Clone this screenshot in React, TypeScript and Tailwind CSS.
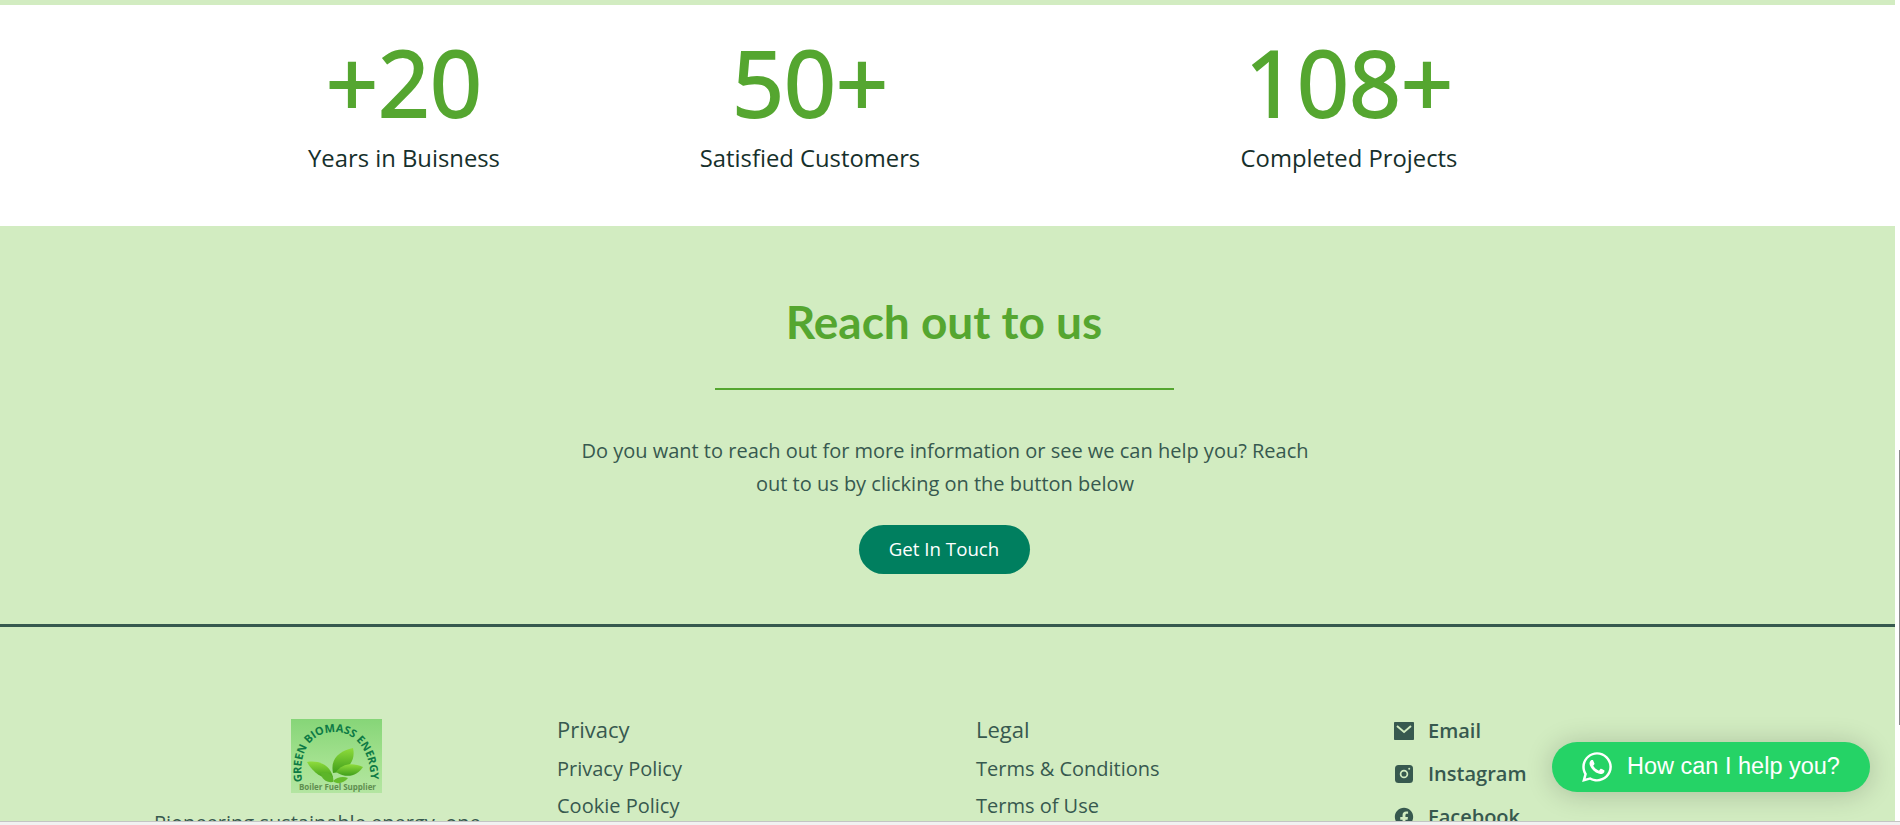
// App.tsx
import type { ReactNode } from "react";
import { FaWhatsapp } from "react-icons/fa";
import { RiFacebookCircleFill, RiMailFill } from "react-icons/ri";

const stats = [
  { value: "+20", label: "Years in Buisness" },
  { value: "50+", label: "Satisfied Customers" },
  { value: "108+", label: "Completed Projects" },
];

function InstagramIcon() {
  return (
    <svg viewBox="0 0 18 18" className="h-[18px] w-[18px]" fill="none">
      <rect width="18" height="18" rx="3.5" fill="#37594f" />
      <circle cx="9" cy="9" r="3.4" stroke="#d2ecc1" strokeWidth="1.7" />
      <circle cx="14.2" cy="3.8" r="1" fill="#d2ecc1" />
    </svg>
  );
}

function Logo() {
  return (
    <svg viewBox="0 0 91 74" className="h-[74px] w-[91px]">
      <defs>
        <linearGradient id="logoBg" x1="0" y1="0" x2="0" y2="1">
          <stop offset="0" stopColor="#86d578" />
          <stop offset="0.6" stopColor="#a5e290" />
          <stop offset="1" stopColor="#b4e5a2" />
        </linearGradient>
        <linearGradient id="leaf" x1="0" y1="0" x2="0" y2="1">
          <stop offset="0" stopColor="#8fdc3c" />
          <stop offset="1" stopColor="#3f9e1a" />
        </linearGradient>
        <path id="logoArc" d="M11 63 C7 32 20 13 44 13 C66 13 84 36 79 74" />
      </defs>
      <rect width="91" height="74" fill="url(#logoBg)" />
      <text fill="#0d7a45" fontSize="11" fontWeight="700" fontFamily="'Open Sans', sans-serif">
        <textPath href="#logoArc">GREEN BIOMASS ENERGY</textPath>
      </text>
      <path d="M42 54 C39 40 48 32 62 29 C65 42 57 52 42 54Z" fill="url(#leaf)" />
      <path d="M45 53 C51 45 61 43 72 48 C66 57 56 60 45 53Z" fill="url(#leaf)" />
      <path d="M41 60 C32 60 22 54 16 43 C28 41 39 46 42 58Z" fill="url(#leaf)" />
      <path d="M30 54 C30 60 36 64 42 63 C44 58 38 52 30 54Z" fill="#5cb52a" />
      <path d="M42 62 C46 58 52 57 57 59 C53 64 46 66 42 62Z" fill="#66bd2c" />
      <text x="8" y="71" textLength="77" fill="#5f8f4f" fontSize="8" fontWeight="700" fontFamily="'Open Sans', sans-serif">
        Boiler Fuel Supplier
      </text>
    </svg>
  );
}

function FooterLink({ icon, label }: { icon: ReactNode; label: string }) {
  return (
    <div className="flex items-center">
      <span className="flex w-[33px] shrink-0">{icon}</span>
      {label}
    </div>
  );
}

export default function App() {
  return (
    <div className="relative flex h-[825px] w-[1900px] flex-col overflow-hidden bg-white font-['Open_Sans',sans-serif]">
      <div className="flex h-[821px] overflow-hidden">
        <main className="w-[1895px] shrink-0">
          <div className="h-[5px] bg-[#d2ecc1]" />

          {/* Stats */}
          <section className="grid h-[221px] grid-cols-[300px_512px_566px] pl-[254px] pt-[21px] text-center">
            {stats.map((s) => (
              <div key={s.label}>
                <div className="text-[91px] font-medium leading-[112px] text-[#55a630] [-webkit-text-stroke:2px_#55a630]">{s.value}</div>
                <div className="mt-[5px] text-[23.8px] leading-[30px] text-[#16302b]">{s.label}</div>
              </div>
            ))}
          </section>

          {/* Reach out */}
          <section className="flex h-[401px] flex-col items-center border-b-[3px] border-[#37594f] bg-[#d2ecc1] pr-[7px] pt-[66px]">
            <h2 className="font-['Lato',sans-serif] text-[46px] font-bold leading-[60px] text-[#55a630]">Reach out to us</h2>
            <div className="mt-[36px] h-[2px] w-[459px] bg-[#55a630]" />
            <p className="ml-[2px] mt-[44px] w-[760px] text-center text-[20px] leading-[33px] text-[#37594f]">
              Do you want to reach out for more information or see we can help you? Reach out to us by clicking on the button below
            </p>
            <button className="mt-[25px] h-[49px] w-[171px] rounded-[25px] bg-[#007f5f] pb-[1px] text-[18.7px] text-white">
              Get In Touch
            </button>
          </section>

          {/* Footer */}
          <footer className="flex bg-[#d2ecc1] pt-[89px] text-[#37594f]">
            <div className="w-[557px] pl-[154px]">
              <div className="ml-[137px] mt-[3px] w-[91px]">
                <Logo />
              </div>
              <p className="mt-[15px] whitespace-nowrap text-[20px] leading-[30px]">
                Pioneering sustainable energy, one
              </p>
            </div>
            <div className="w-[419px]">
              <div className="-mt-[1px] text-[22px] leading-[28px]">Privacy</div>
              <div className="mt-[12px] text-[20px] leading-[27px]">Privacy Policy</div>
              <div className="mt-[10px] text-[20px] leading-[27px]">Cookie Policy</div>
            </div>
            <div className="w-[419px]">
              <div className="-mt-[1px] text-[22px] leading-[28px]">Legal</div>
              <div className="mt-[12px] text-[20px] leading-[27px]">Terms &amp; Conditions</div>
              <div className="mt-[10px] text-[20px] leading-[27px]">Terms of Use</div>
            </div>
            <div className="mt-[1px] flex flex-col gap-[16px] text-[20px] font-semibold leading-[27px]">
              <FooterLink icon={<RiMailFill className="-ml-[3px] h-[24px] w-[24px]" />} label="Email" />
              <FooterLink icon={<InstagramIcon />} label="Instagram" />
              <FooterLink icon={<RiFacebookCircleFill className="-ml-[2px] h-[22px] w-[22px]" />} label="Facebook" />
            </div>
          </footer>
        </main>

        {/* Scrollbar */}
        <div className="flex w-[5px] justify-end pt-[450px]">
          <div className="h-[275px] w-[1px] bg-[#8a8a8a]" />
        </div>
      </div>
      <div className="h-[4px] border-t border-[#c4c4c4] bg-[#f1f1f1]" />

      {/* WhatsApp bubble */}
      <div className="absolute left-[1552px] top-[742px] flex h-[50px] w-[318px] items-center gap-[13px] rounded-[25px] bg-[#25d366] pl-[28px] font-['Liberation_Sans',sans-serif] text-[23.5px] text-white shadow-[0_2px_28px_rgba(0,0,0,0.2)]">
        <FaWhatsapp className="h-[34px] w-[34px]" />
        How can I help you?
      </div>
    </div>
  );
}
